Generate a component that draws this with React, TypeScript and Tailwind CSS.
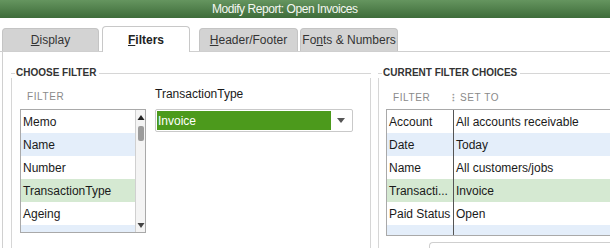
import React from "react";

const font = { fontFamily: '"Liberation Sans", Arial, sans-serif' };

function Tab({ children, active, w }: { children: React.ReactNode; active?: boolean; w: string }) {
  if (active) {
    return (
      <div
        className={`${w} h-[26px] -mb-px bg-white border border-b-0 border-[#c8c8c8] rounded-t-[4px] flex items-center justify-center text-[12px] font-bold text-[#222]`}
      >
        {children}
      </div>
    );
  }
  return (
    <div
      className={`${w} h-[23px] bg-[#d3d3d3] border border-b-0 border-[#c4c4c4] rounded-t-[4px] flex items-center justify-center text-[12px] text-[#333]`}
    >
      {children}
    </div>
  );
}

function GroupHeader({ label }: { label: string }) {
  return (
    <div className="flex items-center h-[10px]">
      <div className="w-[4px] h-px bg-[#d6d6d6]" />
      <div className="px-[1px] text-[10px] font-bold leading-[10px] text-[#333]">{label}</div>
      <div className="flex-1 h-px bg-[#d6d6d6] ml-[2px]" />
    </div>
  );
}

export default function App() {
  const leftRows = [
    { t: "Memo", bg: "bg-white" },
    { t: "Name", bg: "bg-[#e4eefa]" },
    { t: "Number", bg: "bg-white" },
    { t: "TransactionType", bg: "bg-[#d5e9d2]" },
    { t: "Ageing", bg: "bg-white" },
  ];
  const rightRows = [
    { a: "Account", b: "All accounts receivable", bg: "bg-white" },
    { a: "Date", b: "Today", bg: "bg-[#e4eefa]" },
    { a: "Name", b: "All customers/jobs", bg: "bg-white" },
    { a: "Transacti...", b: "Invoice", bg: "bg-[#d5e9d2]" },
    { a: "Paid Status", b: "Open", bg: "bg-white" },
  ];
  return (
    <div className="w-[610px] h-[248px] overflow-hidden bg-white flex flex-col" style={font}>
      {/* title bar */}
      <div className="h-[18px] shrink-0 bg-gradient-to-b from-[#65955f] to-[#3e6c3a] flex items-center">
        <span className="ml-[212px] text-[12px] leading-[14px] tracking-[-0.45px] text-[#f4f7f2]">Modify Report: Open Invoices</span>
      </div>

      {/* tabs */}
      <div className="mt-[9px] h-[25px] shrink-0 flex items-end pl-[2px] border-b border-[#cfcfcf]">
        <Tab w="w-[97px]">
          <span><u>D</u>isplay</span>
        </Tab>
        <div className="w-[3px]" />
        <Tab w="w-[88px]" active>
          <span><u>F</u>ilters</span>
        </Tab>
        <div className="w-[9px]" />
        <Tab w="w-[99px]">
          <span><u>H</u>eader/Footer</span>
        </Tab>
        <div className="w-[2px]" />
        <Tab w="w-[98px]">
          <span className="whitespace-nowrap">Fo<u>n</u>ts &amp; Numbers</span>
        </Tab>
      </div>

      {/* body */}
      <div className="flex-1 flex ml-[2px] border-l border-[#d0d0d0] pt-[16px]">
        {/* choose filter */}
        <div className="ml-[8px] w-[360px] flex flex-col">
          <GroupHeader label="CHOOSE FILTER" />
          <div className="flex-1 border-l border-[#d6d6d6] border-r flex pl-[8px]">
            <div className="flex flex-col w-[126px]">
              <div className="h-[31px] flex items-end pb-[6px] pl-[7px]">
                <span className="text-[10px] leading-[12px] text-[#8a8a8a] tracking-[0.6px]">FILTER</span>
              </div>
              <div className="h-[124px] border border-[#a9a9a9] flex">
                <div className="flex-1 flex flex-col">
                  {leftRows.map((r) => (
                    <div key={r.t} className={`h-[23px] shrink-0 ${r.bg} flex items-center pl-[2px] text-[12px] text-[#1a1a1a]`}>
                      {r.t}
                    </div>
                  ))}
                  <div className="flex-1 bg-[#e4eefa]" />
                </div>
                <div className="w-[10px] bg-[#f4f4f4] border-l border-[#d0d0d0] flex flex-col items-center">
                  <svg width="8" height="7" viewBox="0 0 8 7" className="mt-[4px]">
                    <path d="M4 1 L7.5 6 L0.5 6 Z" fill="#222" />
                  </svg>
                  <div className="mt-[5px] w-[6px] h-[15px] rounded-[2px] bg-[#9c9c9c]" />
                  <div className="flex-1" />
                  <svg width="8" height="7" viewBox="0 0 8 7" className="mb-[3px]">
                    <path d="M0.5 1 L7.5 1 L4 6 Z" fill="#444" />
                  </svg>
                </div>
              </div>
            </div>
            <div className="ml-[9px] flex flex-col">
              <div className="h-[31px] flex items-end pb-[7px]">
                <span className="text-[12px] leading-[15px] text-[#1a1a1a]">TransactionType</span>
              </div>
              <div className="w-[198px] h-[23px] border border-[#c9c9c9] rounded-[2px] flex items-stretch p-px bg-white">
                <div className="flex-1 bg-[#4c9a1c] flex items-center pl-[1px] text-[12px] text-white">Invoice</div>
                <div className="w-[20px] flex items-center justify-center">
                  <svg width="8" height="5" viewBox="0 0 8 5">
                    <path d="M0 0 L8 0 L4 5 Z" fill="#555" />
                  </svg>
                </div>
              </div>
            </div>
          </div>
        </div>

        {/* current filter choices */}
        <div className="ml-[7px] flex-1 flex flex-col">
          <GroupHeader label="CURRENT FILTER CHOICES" />
          <div className="flex-1 border-l border-[#d6d6d6] flex flex-col pl-[7px]">
            <div className="h-[31px] flex items-end pb-[5px] text-[10px] leading-[12px] text-[#8a8a8a] tracking-[0.6px]">
              <span className="ml-[7px] w-[59px]">FILTER</span>
              <span className="text-[#999] font-bold mr-[5px] tracking-normal">⁝</span>
              <span>SET TO</span>
            </div>
            <div className="h-[127px] border border-r-0 border-[#a9a9a9] flex flex-col">
              {rightRows.map((r) => (
                <div key={r.a} className={`h-[23px] shrink-0 ${r.bg} flex items-center text-[12px] text-[#1a1a1a]`}>
                  <div className="w-[66px] pl-[2px] whitespace-nowrap overflow-hidden">{r.a}</div>
                  <div className="pl-[2px] border-l border-[#555] h-full flex items-center">{r.b}</div>
                </div>
              ))}
              <div className="flex-1 bg-[#e4eefa] flex">
                <div className="w-[66px]" />
                <div className="border-l border-[#555]" />
              </div>
            </div>
            <div className="mt-[6px] ml-[43px] h-[20px] border border-r-0 border-[#cfcfcf] rounded-tl-[4px]" />
          </div>
        </div>
      </div>
    </div>
  );
}
